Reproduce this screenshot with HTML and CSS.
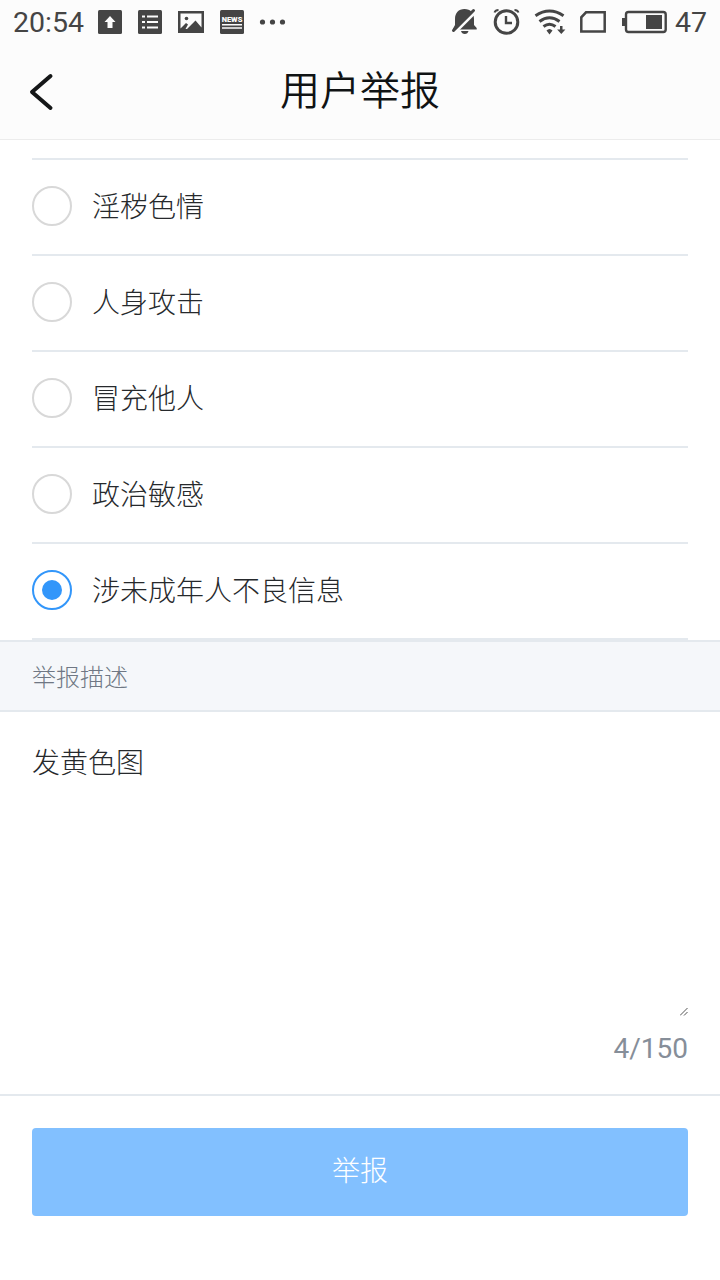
FILE: index.html
```html
<!DOCTYPE html>
<html lang="zh-CN">
<head>
	<meta charset="UTF-8">
	<title>用户举报</title>
	<link rel="stylesheet" href="styles.css">
</head>
<body>
	<header>
		<div class="status">
			<span class="time">20:54</span>
			<svg class="notices" width="190" height="44" viewBox="97 0 190 44">
				<!-- 上传 -->
				<rect x="98" y="10" width="24" height="24" rx="1.5"/>
				<path class="light" d="M110 16l5.500 6h-3v6h-5v-6h-3z"/>
				<!-- 列表 -->
				<rect x="138" y="10" width="24" height="24" rx="1.5"/>
				<path class="light" d="M142 15.500h3v2h-3zM147 15.500h11v2h-11zM142 21h3v2h-3zM147 21h11v2h-11zM142 26.500h3v2h-3zM147 26.500h11v2h-11z"/>
				<!-- 图片 -->
				<path fill-rule="evenodd" d="M178 11h26v22h-26zM180.500 13.500v15l5.500-5.500 2 1.500-2.500 4.500h1.500l8.500-8.500 6 7v-14z"/>
				<circle cx="186.500" cy="18.500" r="1.800"/>
				<!-- 新闻 -->
				<rect x="220" y="10" width="24" height="24" rx="1.500"/>
				<text class="light news" x="232" y="21.500" text-anchor="middle">NEWS</text>
				<path class="light" d="M222 24h20v1.500h-20zM222 27.200h20v1.500h-20z"/>
				<circle cx="262.500" cy="22" r="2.600"/>
				<circle cx="272.500" cy="22" r="2.600"/>
				<circle cx="282.500" cy="22" r="2.600"/>
			</svg>
			<svg class="system" width="218" height="44" viewBox="450 0 218 44">
				<!-- 静音 -->
				<path d="M464.500 9c6 0 9.500 4 9.500 10v6l2.700 3v1.500h-24.200l2.500-4.500v-6c0-6 3.500-10 9.500-10zM461 31h7.500c-.5 2-1.700 3-3.700 3s-3.300-1-3.800-3z"/>
				<path class="cut" d="M454.500 33l23-23"/>
				<path class="line" d="M453.500 30.500L473.500 10.500" stroke-width="3" stroke-linecap="round"/>
				<!-- 闹钟 -->
				<circle class="line" cx="506.500" cy="22" r="11.300" stroke-width="3"/>
				<path class="line" d="M506 16v7h6" stroke-width="2.400"/>
				<path class="line" d="M494.500 12.500q1-2.500 4-2.500M518.500 12.500q-1-2.500-4-2.500" stroke-width="2"/>
				<!-- 无线网 -->
				<path class="line" d="M535.500 15.800q14-9.500 28 0M539.500 21.500q10-7.500 20 0M543.500 26.500q6-4.500 12 0" stroke-width="3"/>
				<path d="M546.500 30.500q3-3 6 0l-3 4zM560 26h2.500v3.500h2.900l-4.100 4.500-4.200-4.500h2.900z"/>
				<!-- SIM 卡 -->
				<path class="line" d="M586 12.300h18.700v19.200h-23.400v-14.200z" stroke-width="2.500"/>
				<!-- 电池 -->
				<rect class="line" x="626" y="12" width="39.700" height="20" rx="2.500" stroke-width="2.400"/>
				<path d="M622 18h3.500v8h-3.500zM646 15h16v14h-16z"/>
			</svg>
			<span class="power">47</span>
		</div>
		<div class="nav">
			<svg class="back" width="26" height="40" viewBox="0 0 26 40">
				<path d="M22.500 4L4 20l18.500 16"/>
			</svg>
			<h1>用户举报</h1>
		</div>
	</header>
	<form>
		<div class="reasons">
			<label class="reason"><input type="radio" name="reason">淫秽色情</label>
			<label class="reason"><input type="radio" name="reason">人身攻击</label>
			<label class="reason"><input type="radio" name="reason">冒充他人</label>
			<label class="reason"><input type="radio" name="reason">政治敏感</label>
			<label class="reason"><input type="radio" name="reason" checked>涉未成年人不良信息</label>
		</div>
		<h2>举报描述</h2>
		<div class="describe">
			<textarea maxlength="150">发黄色图</textarea>
			<svg class="grip" width="8" height="8" viewBox="0 0 8 8">
				<path d="M0 7.500L7.500 0M4 7.500L7.500 4"/>
			</svg>
			<div class="count">4/150</div>
		</div>
		<div class="submit">
			<button type="button">举报</button>
		</div>
	</form>
</body>
</html>
```

FILE: styles.css
```css
*{
	margin: 0;
	padding: 0;
	box-sizing: border-box;
	font-family: Roboto, 'Noto Sans CJK SC', sans-serif;
	font-weight: 300;
}
body{
	background: #fff;
	color: #26292c;
	font-size: 28px;
}
header{
	height: 140px;
	background: #fcfcfc;
	border-bottom: 1px solid #ececec;
}
.status{
	display: flex;
	height: 44px;
	padding: 0 13px;
	line-height: 45px;
	font-size: 28.5px;
	color: #454545;
	fill: #454545;
}
.time, .power{
	font-weight: 400;
}
.time{
	width: 84px;
}
.system{
	margin-left: auto;
	margin-right: 7px;
}
.power{
	width: 32px;
}
.light{
	fill: #fcfcfc;
}
.news{
	font-size: 7.5px;
	font-weight: 900;
}
.line{
	fill: none;
	stroke: #454545;
}
.cut{
	fill: none;
	stroke: #fcfcfc;
	stroke-width: 3;
}
.nav{
	display: grid;
	grid-template-columns: 60px 1fr 60px;
	align-items: center;
	height: 95px;
	padding: 0 28px;
}
.back path{
	fill: none;
	stroke: #151718;
	stroke-width: 4;
	stroke-linecap: round;
	stroke-linejoin: round;
}
h1{
	text-align: center;
	line-height: 90px;
	font-size: 40px;
	font-weight: 350;
	color: #101314;
}
/*举报原因*/
.reasons{
	margin: 18px 32px 0;
	border-top: 2px solid #e4e9ee;
}
.reason{
	display: flex;
	height: 96px;
	border-bottom: 2px solid #e4e9ee;
	line-height: 95px;
}
input{
	appearance: none;
	width: 40px;
	height: 40px;
	margin-top: 26px;
	margin-right: 20px;
	border: 2px solid #d8d8d8;
	border-radius: 50%;
	background: #fff;
}
input:checked{
	padding: 8px;
	border-color: #3296fa;
	background: #3296fa content-box;
}
h2{
	height: 72px;
	padding-left: 32px;
	border-top: 2px solid #e4e9ee;
	border-bottom: 2px solid #e4e9ee;
	background: #f5f7fa;
	line-height: 72px;
	font-size: 24px;
	color: #6f7784;
}
.describe{
	position: relative;
	height: 384px;
	padding: 32px 32px 0;
	border-bottom: 2px solid #e4e9ee;
}
textarea{
	display: block;
	width: 100%;
	height: 272px;
	border: 0;
	outline: 0;
	resize: none;
	background: none;
	line-height: 40px;
	font-size: 28px;
	color: #26292c;
}
.grip{
	position: absolute;
	right: 32px;
	top: 296px;
	stroke: #555;
}
.count{
	line-height: 66px;
	text-align: right;
	font-size: 28px;
	font-weight: 400;
	color: #868e99;
}
.submit{
	padding: 32px;
}
button{
	display: block;
	width: 100%;
	height: 88px;
	padding-bottom: 6px;
	border: 0;
	border-radius: 4px;
	background: #82c0ff;
	color: #fff;
	font-size: 28px;
}
```
